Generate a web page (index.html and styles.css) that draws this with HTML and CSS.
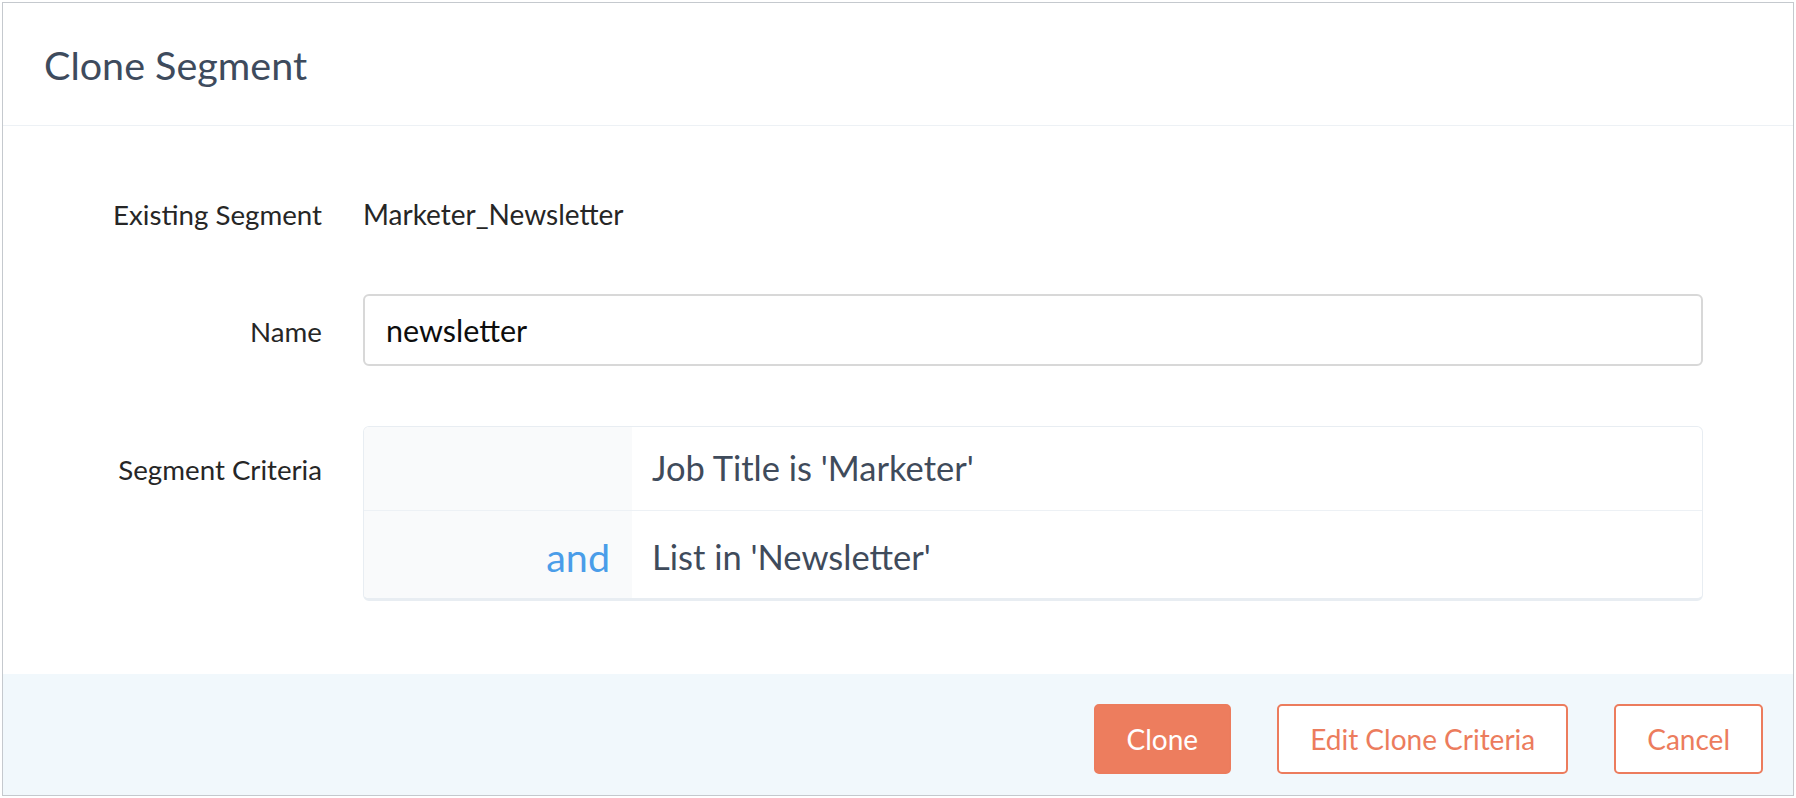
FILE: index.html
```html
<!DOCTYPE html>
<html>
<head>
  <title>Clone Segment</title>
  <link rel="stylesheet" href="styles.css">
</head>
<body>
  <div id="cloneDialog" class="dialog">
    <div class="dialog-header">
      <h2>Clone Segment</h2>
    </div>

    <div class="dialog-body">
      <div class="field">
        <label class="field-label">Existing Segment</label>
        <div class="field-value">Marketer_Newsletter</div>
      </div>

      <div class="field">
        <label class="field-label" for="segmentName">Name</label>
        <input type="text" id="segmentName" class="text-input" value="newsletter">
      </div>

      <div class="field field-top">
        <label class="field-label">Segment Criteria</label>
        <div class="criteria">
          <div class="criteria-row">
            <div class="criteria-op"></div>
            <div class="criteria-text">Job Title is 'Marketer'</div>
          </div>
          <div class="criteria-row">
            <div class="criteria-op">and</div>
            <div class="criteria-text">List in 'Newsletter'</div>
          </div>
        </div>
      </div>
    </div>

    <div class="dialog-footer">
      <button class="btn btn-primary">Clone</button>
      <button class="btn">Edit Clone Criteria</button>
      <button class="btn">Cancel</button>
    </div>
  </div>
</body>
</html>
```

FILE: styles.css
```css
html, body {
  height: 100%;
}

body {
  margin: 0;
  padding: 2px;
  box-sizing: border-box;
  background-color: #ffffff;
  font-family: Lato, "Open Sans", sans-serif;
}

.dialog {
  height: 100%;
  box-sizing: border-box;
  border: 1px solid #c5c9ce;
  display: flex;
  flex-direction: column;
}

.dialog-header {
  height: 122px;
  display: flex;
  align-items: center;
  padding-left: 41px;
  border-bottom: 1px solid #edf1f5;
}

.dialog-header h2 {
  margin: 0;
  font-size: 39.5px;
  font-weight: 400;
  color: #3e4b5d;
}

.dialog-body {
  flex: 1;
  padding: 69px 90px 0 90px;
  display: flex;
  flex-direction: column;
  gap: 60px;
}

.field {
  display: flex;
  align-items: baseline;
  gap: 41px;
}

/* criteria list: label sits on the first row's text line */
.field-top {
  align-items: flex-start;
}

.field-top .field-label {
  padding-top: 25px;
}

.field-label {
  width: 229px;
  flex-shrink: 0;
  text-align: right;
  font-size: 27.7px;
  line-height: 38px;
  color: #262626;
}

.field-value {
  font-size: 28px;
  line-height: 38px;
  color: #262626;
}

.text-input {
  flex: 1;
  height: 72px;
  box-sizing: border-box;
  padding: 0 21px;
  border: 2px solid #d8d8d8;
  border-radius: 6px;
  font-family: Lato, "Open Sans", sans-serif;
  font-size: 30.5px;
  color: #0d0d0d;
  outline: none;
}

.criteria {
  flex: 1;
  border: 1px solid #e8edf2;
  border-bottom-width: 3px;
  border-radius: 6px;
  overflow: hidden;
}

.criteria-row {
  display: flex;
}

.criteria-row + .criteria-row {
  border-top: 1px solid #edf1f5;
}

.criteria-op {
  width: 268px;
  flex-shrink: 0;
  box-sizing: border-box;
  padding: 20px 22px 21px 0;
  background-color: #f9fafb;
  text-align: right;
  font-size: 34.5px;
  line-height: 42px;
  color: #4a9de9;
}

.criteria-text {
  padding: 20px 20px 21px 20px;
  font-size: 34.5px;
  line-height: 42px;
  color: #3f4b5b;
}

.criteria-row + .criteria-row .criteria-op,
.criteria-row + .criteria-row .criteria-text {
  padding-top: 25px;
  padding-bottom: 20px;
}

.criteria-row + .criteria-row .criteria-op {
  font-size: 39.5px;
}

.dialog-footer {
  display: flex;
  justify-content: flex-end;
  gap: 46px;
  padding: 30px 30px 21px 0;
  background-color: #f1f8fc;
}

.btn {
  height: 70px;
  padding: 0 31px;
  border: 2px solid #ec7c5d;
  border-radius: 5px;
  background-color: #ffffff;
  font-family: Lato, "Open Sans", sans-serif;
  font-size: 28px;
  color: #ec7c5d;
  cursor: pointer;
}

.btn-primary {
  background-color: #ed7d5e;
  color: #ffffff;
}
```
